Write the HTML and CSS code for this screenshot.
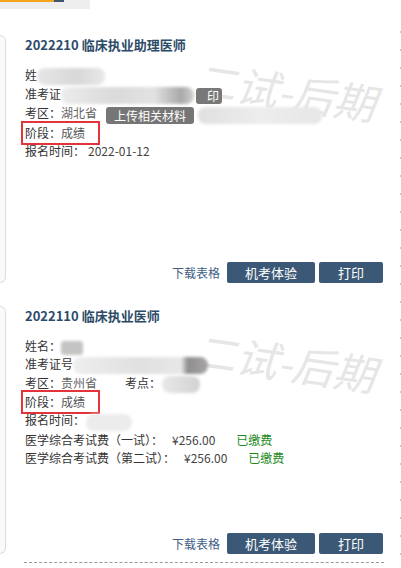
FILE: index.html
```html
<!DOCTYPE html>
<html>
  <head>
    <meta charset="UTF-8">
    <meta name="viewport" content="width=device-width, initial-scale=1">
    <link rel="stylesheet" href="styles.css">
  </head>
  <body>
    <div class="page">
      <div class="main">
        <div class="topbar"><span class="topbar-hi"></span><span class="topbar-dark"></span></div>

        <div class="list">
          <!-- first registration -->
          <div class="item">
            <div class="peek"></div>
            <div class="card">
              <div class="watermark">二试-后期</div>
              <h3 class="title">2022210 临床执业助理医师</h3>
              <div class="info">
                <p class="row">姓<span class="blur blur-name"></span></p>
                <p class="row">准考证<span class="blur blur-id"></span><span class="badge">印</span></p>
                <p class="row">考区：<span class="muted">湖北省</span><span class="upload">上传相关材料</span><span class="blur blur-site"></span></p>
                <p class="row"><span class="mark">阶段：<span class="val">成绩</span></span></p>
                <p class="row">报名时间：<span class="date">2022-01-12</span></p>
              </div>
              <div class="actions">
                <a class="link">下载表格</a>
                <span class="btn">机考体验</span>
                <span class="btn btn-narrow">打印</span>
              </div>
            </div>
          </div>

          <!-- second registration -->
          <div class="item">
            <div class="peek"></div>
            <div class="card">
              <div class="watermark">二试-后期</div>
              <h3 class="title">2022110 临床执业医师</h3>
              <div class="info">
                <p class="row">姓名：<span class="blur blur-sq"></span></p>
                <p class="row">准考证号<span class="blur blur-id2"></span></p>
                <p class="row">考区：<span class="muted">贵州省</span><span class="spot">考点：</span><span class="blur blur-spot"></span></p>
                <p class="row"><span class="mark">阶段：<span class="val">成绩</span></span></p>
                <p class="row">报名时间：<span class="blur blur-date"></span></p>
                <p class="row">医学综合考试费（一试）：<span class="fee">¥256.00</span><span class="paid">已缴费</span></p>
                <p class="row">医学综合考试费（第二试）：<span class="fee">¥256.00</span><span class="paid">已缴费</span></p>
              </div>
              <div class="actions">
                <a class="link">下载表格</a>
                <span class="btn">机考体验</span>
                <span class="btn btn-narrow">打印</span>
              </div>
            </div>
          </div>
        </div>

        <div class="divider"></div>
      </div>
      <div class="rail"></div>
    </div>
  </body>
</html>
```

FILE: styles.css
```css
body {
  margin: 0;
  font-family: "Noto Sans CJK SC", sans-serif;
  font-size: 12px;
  color: #333;
  background: #fff;
}
.page {
  display: flex;
}
.main {
  flex: 1;
}
.topbar {
  display: flex;
  width: 90px;
  height: 9px;
  background: #eeeeee;
}
.topbar-hi {
  width: 54px;
  height: 2px;
  background: #f2a41e;
}
.topbar-dark {
  width: 10px;
  height: 2px;
  background: #3e5670;
}
.list {
  display: flex;
  flex-direction: column;
  gap: 23px;
  margin-top: 26px;
}
.item {
  display: flex;
  height: 248px;
}
.peek {
  width: 5px;
  border: 1px solid #dedede;
  border-left: none;
  border-radius: 0 7px 7px 0;
  background: #fafafa;
}
.card {
  flex: 1;
  position: relative;
  isolation: isolate;
  display: flex;
  flex-direction: column;
  padding: 1px 17px 0 19px;
}
.watermark {
  position: absolute;
  left: 188px;
  top: 34px;
  z-index: -1;
  font-size: 42px;
  line-height: 42px;
  font-style: italic;
  color: #e6e6e6;
  white-space: nowrap;
  transform: rotate(8deg);
}
.title {
  margin: 0;
  font-size: 13px;
  line-height: 18px;
  font-weight: bold;
  color: #2d4b69;
}
.info {
  margin-top: 12px;
}
.row {
  margin: 0;
  line-height: 18px;
  white-space: nowrap;
}
.muted {
  color: #666;
}
.val {
  color: #555;
}
.date {
  margin-left: 3px;
  color: #444;
}
.mark {
  display: inline-block;
  margin: -3px 0 -3px -4px;
  padding: 1px 13px 1px 2px;
  border: 2px solid #e2343a;
  line-height: 18px;
}
.upload {
  display: inline-block;
  margin-left: 9px;
  padding: 0 8px;
  height: 17px;
  line-height: 17px;
  border-radius: 3px;
  background: #767676;
  color: #fff;
  font-size: 12px;
  vertical-align: middle;
}
.badge {
  display: inline-block;
  margin-left: 2px;
  width: 26px;
  height: 16px;
  line-height: 16px;
  border-radius: 3px;
  background: #787878;
  color: #fff;
  text-align: right;
  padding-right: 3px;
  box-sizing: border-box;
  vertical-align: middle;
}
.spot {
  margin-left: 28px;
}
.blur {
  display: inline-block;
  height: 17px;
  border-radius: 8px;
  filter: blur(1.5px);
  vertical-align: middle;
}
.blur-name {
  width: 68px;
  background: linear-gradient(90deg, #e6e6e6, #d8d8d8 60%, #e8e8e8);
}
.blur-id {
  width: 133px;
  background: linear-gradient(90deg, #ececec, #dadada 40%, #e2e2e2 70%, #a9a9a9 90%, #d0d0d0);
}
.blur-site {
  margin-left: 4px;
  width: 124px;
  background: linear-gradient(90deg, #e0e0e0, #ededed 50%, #e6e6e6);
}
.blur-sq {
  width: 22px;
  height: 14px;
  border-radius: 3px;
  background: #c4c4c4;
}
.blur-id2 {
  width: 135px;
  background: linear-gradient(90deg, #eeeeee, #e0e0e0 50%, #e8e8e8 80%, #8f8f8f 85%, #a8a4a6);
}
.blur-spot {
  margin-left: 1px;
  width: 38px;
  background: linear-gradient(90deg, #e8e8e8, #d2d2d2);
}
.blur-date {
  margin-left: 1px;
  width: 46px;
  background: #ececec;
}
.fee {
  margin-left: 9px;
  color: #444;
}
.paid {
  margin-left: 21px;
  color: #1d8a1d;
}
.actions {
  margin-top: auto;
  display: flex;
  justify-content: flex-end;
  align-items: center;
}
.link {
  margin-right: 7px;
  font-size: 12px;
  color: #3f6185;
}
.btn {
  width: 88px;
  height: 21px;
  line-height: 21px;
  border-radius: 2px;
  background: #3b5977;
  color: #fff;
  font-size: 13px;
  text-align: center;
}
.btn-narrow {
  width: 64px;
  margin-left: 4px;
}
.divider {
  margin: 8px 16px 0 24px;
  border-top: 1px dashed #999999;
}
.rail {
  width: 1px;
  margin-top: 31px;
  background-image: linear-gradient(#c4c4c4 2px, transparent 2px);
  background-size: 1px 18px;
}
```
